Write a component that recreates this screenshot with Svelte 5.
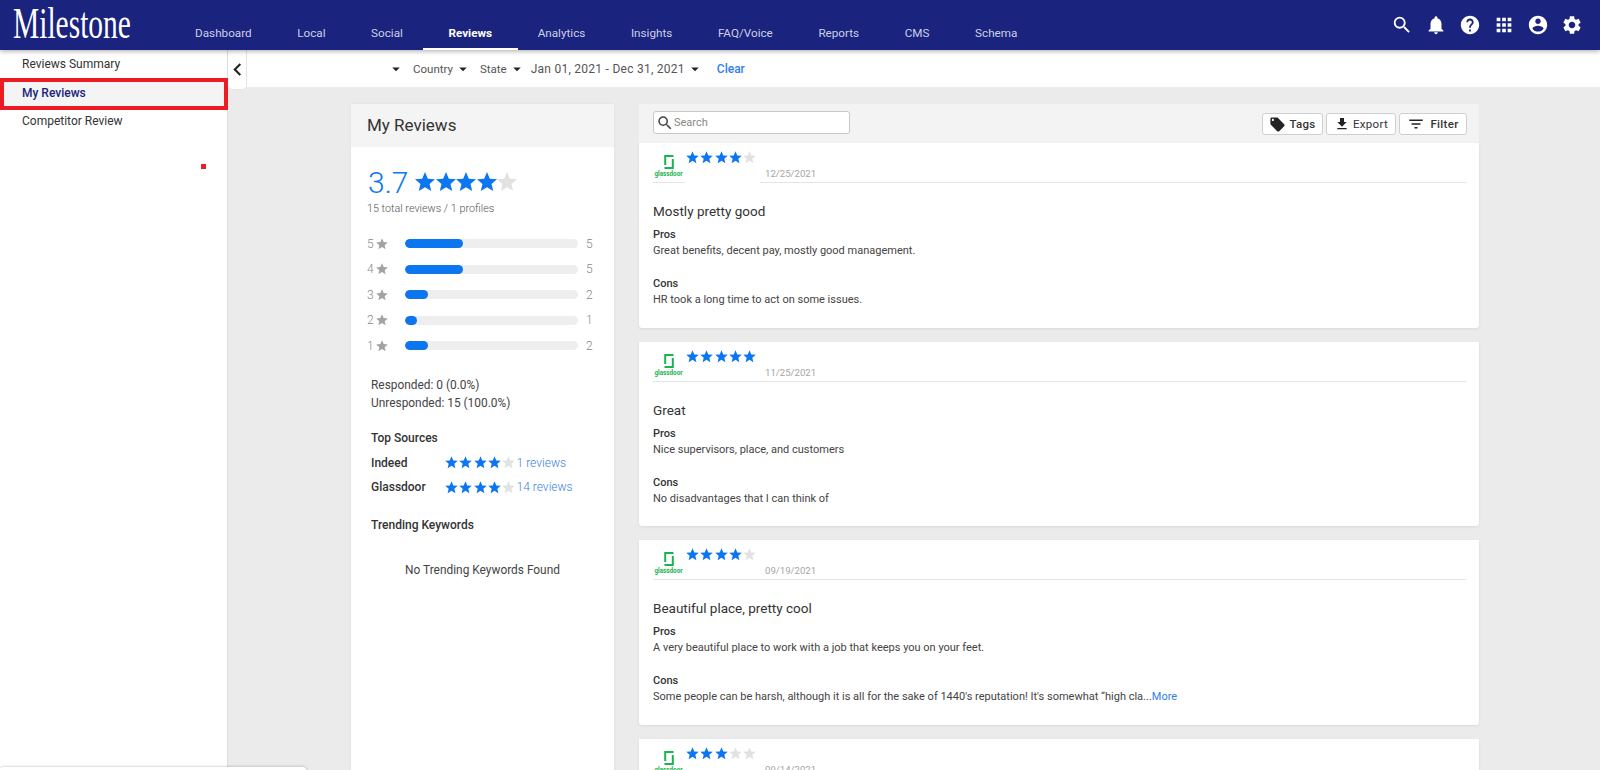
<script>
  const navItems = ['Dashboard', 'Local', 'Social', 'Reviews', 'Analytics', 'Insights', 'FAQ/Voice', 'Reports', 'CMS', 'Schema'];
  const sideItems = ['Reviews Summary', 'My Reviews', 'Competitor Review'];
  const topIcons = [
    'M15.5 14h-.79l-.28-.27A6.471 6.471 0 0 0 16 9.5 6.5 6.5 0 1 0 9.5 16c1.61 0 3.09-.59 4.23-1.57l.27.28v.79l5 4.99L20.49 19l-4.99-5zm-6 0C7.01 14 5 11.99 5 9.5S7.01 5 9.5 5 14 7.01 14 9.5 11.99 14 9.5 14z',
    'M12 22c1.1 0 2-.9 2-2h-4c0 1.1.89 2 2 2zm6-6v-5c0-3.07-1.64-5.64-4.5-6.32V4c0-.83-.67-1.5-1.5-1.5s-1.5.67-1.5 1.5v.68C7.63 5.36 6 7.92 6 11v5l-2 2v1h16v-1l-2-2z',
    'M12 2C6.48 2 2 6.48 2 12s4.48 10 10 10 10-4.48 10-10S17.52 2 12 2zm1 17h-2v-2h2v2zm2.07-7.75l-.9.92C13.45 12.9 13 13.5 13 15h-2v-.5c0-1.1.45-2.1 1.17-2.83l1.24-1.26c.37-.36.59-.86.59-1.41 0-1.1-.9-2-2-2s-2 .9-2 2H8c0-2.21 1.79-4 4-4s4 1.79 4 4c0 .88-.36 1.68-.93 2.25z',
    'M4 8h4V4H4v4zm6 12h4v-4h-4v4zm-6 0h4v-4H4v4zm0-6h4v-4H4v4zm6 0h4v-4h-4v4zm6-10v4h4V4h-4zm-6 4h4V4h-4v4zm6 6h4v-4h-4v4zm0 6h4v-4h-4v4z',
    'M12 2C6.48 2 2 6.48 2 12s4.48 10 10 10 10-4.48 10-10S17.52 2 12 2zm0 3c1.66 0 3 1.34 3 3s-1.34 3-3 3-3-1.34-3-3 1.34-3 3-3zm0 14.2c-2.5 0-4.71-1.28-6-3.22.03-1.99 4-3.08 6-3.08 1.99 0 5.97 1.09 6 3.08-1.29 1.94-3.5 3.22-6 3.22z',
    'M19.14 12.94c.04-.3.06-.61.06-.94 0-.32-.02-.64-.07-.94l2.03-1.58c.18-.14.23-.41.12-.61l-1.92-3.32c-.12-.22-.37-.29-.59-.22l-2.39.96c-.5-.38-1.03-.7-1.62-.94l-.36-2.54c-.04-.24-.24-.41-.48-.41h-3.84c-.24 0-.43.17-.47.41l-.36 2.54c-.59.24-1.13.57-1.62.94l-2.39-.96c-.22-.08-.47 0-.59.22L2.74 8.87c-.12.21-.08.47.12.61l2.03 1.58c-.05.3-.09.63-.09.94s.02.64.07.94l-2.03 1.58c-.18.14-.23.41-.12.61l1.92 3.32c.12.22.37.29.59.22l2.39-.96c.5.38 1.03.7 1.62.94l.36 2.54c.05.24.24.41.48.41h3.84c.24 0 .44-.17.47-.41l.36-2.54c.59-.24 1.13-.56 1.62-.94l2.39.96c.22.08.47 0 .59-.22l1.92-3.32c.12-.22.07-.47-.12-.61l-2.01-1.58zM12 15.6c-1.98 0-3.6-1.62-3.6-3.6s1.62-3.6 3.6-3.6 3.6 1.62 3.6 3.6-1.62 3.6-3.6 3.6z'
  ];
  const starPath = 'M12 17.27L18.18 21l-1.64-7.03L22 9.24l-7.19-.61L12 2 9.19 8.63 2 9.24l5.46 4.73L5.82 21z';
  const caretPath = 'M7 10l5 5 5-5z';

  const breakdown = [
    { stars: 5, count: 5 },
    { stars: 4, count: 5 },
    { stars: 3, count: 2 },
    { stars: 2, count: 1 },
    { stars: 1, count: 2 }
  ];
  const sources = [
    { name: 'Indeed', label: '1 reviews' },
    { name: 'Glassdoor', label: '14 reviews' }
  ];
  const reviews = [
    { rating: 4, date: '12/25/2021', title: 'Mostly pretty good', pros: 'Great benefits, decent pay, mostly good management.', cons: 'HR took a long time to act on some issues.', gap: true },
    { rating: 5, date: '11/25/2021', title: 'Great', pros: 'Nice supervisors, place, and customers', cons: 'No disadvantages that I can think of' },
    { rating: 4, date: '09/19/2021', title: 'Beautiful place, pretty cool', pros: 'A very beautiful place to work with a job that keeps you on your feet.', cons: 'Some people can be harsh, although it is all for the sake of 1440\'s reputation! It\'s somewhat “high cla...', more: true },
    { rating: 3, date: '09/14/2021', title: '', pros: '', cons: '' }
  ];
</script>

{#snippet stars(rating, size)}
  <span class="stars">
    {#each [1, 2, 3, 4, 5] as n}
      <svg width={size} height={size} viewBox="0 0 24 24" fill={n <= rating ? '#0b76f0' : '#e2e2e2'}><path d={starPath} /></svg>
    {/each}
  </span>
{/snippet}

{#snippet caret()}
  <svg class="caret" width="18" height="18" viewBox="0 0 24 24" fill="#222"><path d={caretPath} /></svg>
{/snippet}

<div class="page">
  <header class="topbar">
    <div class="logo-wrap"><span class="logo">Milestone</span></div>
    <nav class="nav">
      {#each navItems as item}
        <span class="nav-item" class:active={item === 'Reviews'}>{item}</span>
      {/each}
    </nav>
    <div class="top-icons">
      {#each topIcons as d}
        <svg width="22" height="22" viewBox="0 0 24 24" fill="#fff"><path {d} /></svg>
      {/each}
    </div>
  </header>

  <div class="body">
    <aside class="sidebar">
      {#each sideItems as item}
        <div class="side-item" class:current={item === 'My Reviews'}>{item}</div>
      {/each}
      <span class="red-dot"></span>
    </aside>

    <main class="main">
      <button class="collapse" aria-label="Collapse">
        <svg width="25" height="25" viewBox="0 0 24 24" fill="#222"><path d="M15.41 7.41L14 6l-6 6 6 6 1.41-1.41L10.83 12z" /></svg>
      </button>

      <div class="filters">
        {@render caret()}
        <span class="filter country">Country</span>
        {@render caret()}
        <span class="filter state">State</span>
        {@render caret()}
        <span class="filter date">Jan 01, 2021 - Dec 31, 2021</span>
        {@render caret()}
        <span class="clear">Clear</span>
      </div>

      <div class="content">
        <section class="summary">
          <h2 class="summary-title">My Reviews</h2>
          <div class="score-row">
            <span class="score">3.7</span>
            {@render stars(4, 24)}
          </div>
          <p class="totals">15 total reviews / 1 profiles</p>

          <div class="breakdown">
            {#each breakdown as row}
              <div class="bar-row">
                <span class="bar-label">{row.stars}</span>
                <svg width="14" height="14" viewBox="0 0 24 24" fill="#a3a3a3"><path d={starPath} /></svg>
                <span class="track"><span class="fill" style="width: {(row.count / 15) * 100}%"></span></span>
                <span class="bar-count">{row.count}</span>
              </div>
            {/each}
          </div>

          <div class="responded">
            <div>Responded: 0 (0.0%)</div>
            <div>Unresponded: 15 (100.0%)</div>
          </div>

          <div class="sources">
            <div class="sources-title">Top Sources</div>
            {#each sources as src}
              <div class="source-row">
                <span class="source-name">{src.name}</span>
                {@render stars(4, 15)}
                <span class="source-link">{src.label}</span>
              </div>
            {/each}
          </div>

          <div class="keywords-title">Trending Keywords</div>
          <div class="no-keywords">No Trending Keywords Found</div>
        </section>

        <section class="reviews">
          <div class="toolbar">
            <div class="search">
              <svg width="18" height="18" viewBox="0 0 24 24" fill="#444"><path d={topIcons[0]} /></svg>
              <span>Search</span>
            </div>
            <div class="actions">
              <button class="btn tags">
                <svg width="17" height="17" viewBox="0 0 24 24" fill="#222"><path d="M21.41 11.58l-9-9C12.05 2.22 11.55 2 11 2H4c-1.1 0-2 .9-2 2v7c0 .55.22 1.05.59 1.42l9 9c.36.36.86.58 1.41.58.55 0 1.05-.22 1.41-.59l7-7c.37-.36.59-.86.59-1.41 0-.55-.23-1.06-.59-1.42zM5.5 7C4.67 7 4 6.33 4 5.5S4.67 4 5.5 4 7 4.67 7 5.5 6.33 7 5.5 7z" /></svg>
                Tags
              </button>
              <button class="btn export">
                <svg width="16" height="16" viewBox="0 0 24 24" fill="#222"><path d="M19 9h-4V3H9v6H5l7 7 7-7zM5 18v2h14v-2H5z" /></svg>
                Export
              </button>
              <button class="btn filter-btn">
                <svg width="18" height="18" viewBox="0 0 24 24" fill="#222"><path d="M10 18h4v-2h-4v2zM3 6v2h18V6H3zm3 7h12v-2H6v2z" /></svg>
                Filter
              </button>
            </div>
          </div>

          {#each reviews as review}
            <article class="review">
              <div class="review-head">
                <div class="gd-logo">
                  <svg width="12" height="14" viewBox="0 0 12 14" fill="none" stroke="#19b34f" stroke-width="2">
                    <path d="M10.5 1H2.2V10" />
                    <path d="M1.5 13H9.8V4" />
                  </svg>
                  <span class="gd-text">glassdoor</span>
                </div>
                <div class="review-stars" class:no-rule={review.gap}>{@render stars(review.rating, 15)}</div>
                <div class="review-date"><span>{review.date}</span></div>
              </div>
              <h3 class="review-title">{review.title}</h3>
              <div class="label">Pros</div>
              <p class="text">{review.pros}</p>
              <div class="label cons">Cons</div>
              <p class="text">{review.cons}{#if review.more}<span class="more">More</span>{/if}</p>
            </article>
          {/each}
        </section>
      </div>
    </main>
  </div>

  <div class="bottom-edge"></div>
</div>

<style>
  :global(body) {
    margin: 0;
    background: #ebebeb;
  }

  .page {
    position: relative;
    width: 1600px;
    height: 770px;
    overflow: hidden;
    font-family: Roboto, "Liberation Sans", sans-serif;
    color: #333;
    display: flex;
    flex-direction: column;
  }

  .topbar {
    flex: 0 0 50px;
    display: flex;
    background: #1a237e;
    box-shadow: 0 1px 5px rgba(0, 0, 0, 0.35);
    position: relative;
    z-index: 3;
  }

  .logo-wrap {
    width: 172.3px;
    padding-left: 13px;
    box-sizing: border-box;
    overflow: hidden;
  }

  .logo {
    display: block;
    transform: scaleX(0.67);
    transform-origin: left center;
    font-family: "Liberation Serif", serif;
    font-size: 44px;
    line-height: 48px;
    color: #fff;
    white-space: nowrap;
  }

  .nav {
    display: flex;
    flex: 1;
  }

  .nav-item {
    padding: 8px 22.8px 0;
    font-size: 11.7px;
    height: 42px;
    line-height: 51px;
    color: #ccd0e6;
  }

  .nav-item.active {
    padding: 8px 25.8px 0;
    margin: 0 -3px;
    color: #fff;
    font-weight: 700;
    border-bottom: 2px solid #fff;
    height: 40px;
    overflow: hidden;
  }

  .top-icons {
    display: flex;
    align-items: center;
    gap: 12px;
    padding: 0 17px 1px 0;
  }

  .body {
    flex: 1;
    display: flex;
    min-height: 0;
  }

  .sidebar {
    position: relative;
    flex: 0 0 227px;
    background: #fff;
    border-right: 1px solid #ddd;
  }

  .side-item {
    height: 28px;
    line-height: 28px;
    padding-left: 22px;
    font-size: 12px;
    color: #333;
  }

  .side-item.current {
    height: 24px;
    line-height: 22px;
    padding-left: 18px;
    margin: 0 -1px -3px 0;
    border: 4px solid #ed1c24;
    background: #f4f4f4;
    color: #1a237e;
    font-weight: 500;
  }

  .red-dot {
    position: absolute;
    left: 201px;
    top: 114px;
    width: 5px;
    height: 5px;
    background: #ed1c24;
  }

  .main {
    position: relative;
    flex: 1;
    min-width: 0;
  }

  .collapse {
    position: absolute;
    left: 0;
    top: 0;
    z-index: 2;
    width: 19px;
    height: 40px;
    padding: 0;
    border: 0;
    border-right: 1px solid #e4e4e4;
    border-bottom: 1px solid #e4e4e4;
    border-radius: 0 0 5px 5px;
    background: #fff;
    display: flex;
    align-items: center;
    justify-content: center;
  }

  .collapse svg {
    flex: none;
  }

  .filters {
    height: 37px;
    background: #fff;
    display: flex;
    align-items: center;
    padding-left: 159px;
    box-sizing: border-box;
    font-size: 11.5px;
    color: #555;
  }

  .caret {
    flex: none;
  }

  .filter {
    color: #555;
  }

  .country {
    margin: 0 1px 0 8px;
  }

  .state {
    margin: 0 1px 0 8px;
  }

  .date {
    margin: 0 1px 0 5px;
    font-size: 12px;
    letter-spacing: 0.26px;
  }

  .clear {
    margin-left: 13px;
    font-size: 12px;
    color: #2f80ed;
    font-weight: 500;
  }

  .content {
    display: flex;
    align-items: flex-start;
    gap: 25px;
    padding: 17px 0 0 123px;
  }

  .summary {
    flex: 0 0 263px;
    height: 700px;
    background: #fff;
    border-radius: 3px 3px 0 0;
    box-shadow: 0 0 3px rgba(0, 0, 0, 0.06);
    font-size: 12px;
  }

  .summary-title {
    margin: 0;
    height: 43px;
    line-height: 43px;
    padding-left: 16px;
    background: #f4f4f4;
    font-size: 17px;
    font-weight: 400;
    color: #333;
  }

  .score-row {
    display: flex;
    align-items: center;
    margin: 17px 0 0 17px;
    height: 36px;
  }

  .score {
    font-size: 30px;
    font-weight: 300;
    color: #0b76f0;
    margin-right: 5px;
  }

  .stars {
    display: inline-flex;
  }

  .stars svg {
    display: block;
    flex: none;
    margin-right: -0.7px;
  }

  .score-row .stars svg {
    margin-right: -3.5px;
  }

  .totals {
    margin: 2px 0 0 16px;
    font-size: 10.8px;
    line-height: 14px;
    font-weight: 300;
    color: #555;
  }

  .breakdown {
    margin-top: 15px;
  }

  .bar-row {
    display: flex;
    align-items: center;
    height: 25.5px;
    padding-left: 16px;
    color: #888;
    font-size: 12px;
    font-weight: 300;
  }

  .bar-label {
    width: 8px;
  }

  .track {
    width: 173px;
    height: 9px;
    margin: 0 8px 0 16px;
    background: #eee;
    border-radius: 5px;
    overflow: hidden;
  }

  .fill {
    display: block;
    height: 100%;
    background: #0b76f0;
    border-radius: 5px;
  }

  .responded {
    margin: 17px 0 0 20px;
    font-size: 11.9px;
    line-height: 18.5px;
    color: #444;
  }

  .sources {
    margin: 16px 0 0 20px;
  }

  .sources-title,
  .keywords-title {
    font-weight: 500;
    color: #333;
    line-height: 18px;
  }

  .sources-title {
    margin-bottom: 4px;
  }

  .source-row {
    display: flex;
    align-items: center;
    height: 24.5px;
    font-weight: 500;
    color: #333;
  }

  .source-name {
    width: 73px;
  }

  .source-link {
    margin-left: 1px;
    color: #3d7fe0;
    font-weight: 300;
  }

  .keywords-title {
    margin: 16px 0 0 20px;
  }

  .no-keywords {
    margin-top: 29px;
    text-align: center;
    font-size: 11.9px;
    color: #444;
  }

  .reviews {
    flex: 0 0 840px;
    border-radius: 3px 3px 0 0;
  }

  .toolbar {
    height: 39px;
    background: #f3f3f3;
    display: flex;
    align-items: flex-start;
    justify-content: space-between;
    padding: 7px 12px 0 14px;
    box-sizing: border-box;
  }

  .search {
    width: 197px;
    height: 23px;
    box-sizing: border-box;
    display: flex;
    align-items: center;
    padding-left: 2px;
    background: #fff;
    border: 1px solid #c8c8c8;
    border-radius: 3px;
    font-size: 11px;
    color: #888;
  }

  .actions {
    display: flex;
    gap: 3px;
    margin-top: 2px;
  }

  .btn {
    height: 22px;
    padding: 0;
    display: flex;
    align-items: center;
    justify-content: center;
    gap: 3px;
    background: #fff;
    border: 1px solid #cfcfcf;
    border-radius: 3px;
    font-family: inherit;
    font-size: 11.5px;
    color: #333;
    letter-spacing: 0.3px;
  }

  .tags {
    width: 61px;
    font-weight: 500;
  }

  .export {
    width: 70px;
  }

  .filter-btn {
    width: 68px;
    gap: 5px;
    font-weight: 500;
  }

  .review {
    height: 184.5px;
    margin-bottom: 14px;
    padding: 0 13px 0 14px;
    box-sizing: border-box;
    background: #fff;
    border-radius: 0 0 3px 3px;
    overflow: hidden;
    box-shadow: 0 1px 3px rgba(0, 0, 0, 0.08);
  }

  .review-head {
    height: 40px;
    display: flex;
  }

  .gd-logo,
  .review-stars,
  .review-date {
    box-sizing: border-box;
    border-bottom: 1px solid #e2e4e8;
  }

  .gd-logo {
    width: 32px;
    display: flex;
    flex-direction: column;
    align-items: center;
    padding: 12px 1px 0 0;
  }

  .gd-logo svg {
    display: block;
    flex: none;
  }

  .gd-text {
    font-size: 6.3px;
    line-height: 8px;
    margin-top: 1px;
    font-weight: 700;
    color: #19b34f;
  }

  .review-stars {
    width: 75px;
    padding-top: 7px;
  }

  .review-stars.no-rule {
    border-bottom-color: transparent;
  }

  .review-date {
    flex: 1;
    padding: 25px 0 0 5px;
    font-size: 9.6px;
    line-height: 12px;
    color: #a5a5a5;
  }

  .review-title {
    margin: 20px 0 0;
    font-size: 13.5px;
    line-height: 17px;
    font-weight: 400;
    color: #333;
  }

  .label {
    margin-top: 7px;
    font-size: 11px;
    line-height: 15px;
    font-weight: 500;
    color: #333;
  }

  .label.cons {
    margin-top: 17px;
  }

  .text {
    margin: 0;
    font-size: 11px;
    line-height: 17px;
    color: #444;
  }

  .more {
    color: #2f80ed;
  }

  .bottom-edge {
    position: absolute;
    left: 0;
    bottom: -6px;
    width: 306px;
    height: 9px;
    background: #fff;
    border-radius: 3px;
    box-shadow: 0 0 3px rgba(0, 0, 0, 0.3);
    z-index: 4;
  }
</style>
